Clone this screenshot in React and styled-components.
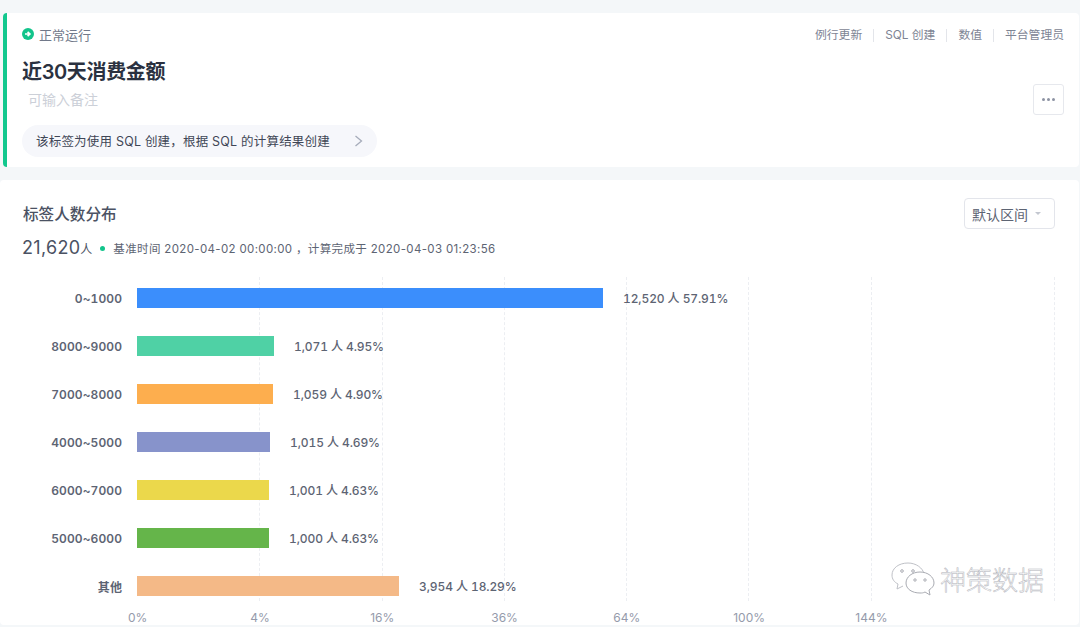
import React from 'react';
import styled, { createGlobalStyle } from 'styled-components';

const rows = [
  { name: '0~1000', width: 466, color: '#3b8efc', value: '12,520 人 57.91%' },
  { name: '8000~9000', width: 137, color: '#4fd1a5', value: '1,071 人 4.95%' },
  { name: '7000~8000', width: 136, color: '#fdae4e', value: '1,059 人 4.90%' },
  { name: '4000~5000', width: 133, color: '#8793cb', value: '1,015 人 4.69%' },
  { name: '6000~7000', width: 132, color: '#ebd84b', value: '1,001 人 4.63%' },
  { name: '5000~6000', width: 132, color: '#65b54a', value: '1,000 人 4.63%' },
  { name: '其他', width: 262, color: '#f4b987', value: '3,954 人 18.29%' },
];

const ticks = ['0%', '4%', '16%', '36%', '64%', '100%', '144%'];
const tags = ['例行更新', 'SQL 创建', '数值', '平台管理员'];

const App = () => {
  return (
    <Page>
      <GlobalStyle />
      <TopCard>
        <TopLeft>
          <Status>
            <svg width="12" height="12" viewBox="0 0 12 12">
              <circle cx="6" cy="6" r="6" fill="#12c48b" />
              <path d="M3 6h4.2M5.6 3.8 7.9 6 5.6 8.2" fill="none" stroke="#fff" strokeWidth="1.7" />
            </svg>
            正常运行
          </Status>
          <Title>近30天消费金额</Title>
          <Note>可输入备注</Note>
          <Pill>
            <span>该标签为使用 SQL 创建，根据 SQL 的计算结果创建</span>
            <svg width="9" height="12" viewBox="0 0 9 12">
              <path d="M1.5 1 7.5 6 1.5 11" fill="none" stroke="#a6acba" strokeWidth="1.3" />
            </svg>
          </Pill>
        </TopLeft>
        <TopRight>
          <Tags>
            {tags.map((t) => (
              <Tag key={t}>{t}</Tag>
            ))}
          </Tags>
          <MoreButton>
            <Dot />
            <Dot />
            <Dot />
          </MoreButton>
        </TopRight>
      </TopCard>

      <ChartCard>
        <ChartHead>
          <ChartTitle>标签人数分布</ChartTitle>
          <Select>
            默认区间
            <Caret />
          </Select>
        </ChartHead>
        <Meta>
          <Count>21,620</Count>
          <Unit>人</Unit>
          <GreenDot />
          <MetaText>基准时间 2020-04-02 00:00:00 ，计算完成于 2020-04-03 01:23:56</MetaText>
        </Meta>
        <Plot>
          <Grid>
            {ticks.slice(1).map((t) => (
              <GridCell key={t} />
            ))}
            <LastGridCell />
          </Grid>
          {rows.map((r) => (
            <Row key={r.name}>
              <Label>{r.name}</Label>
              <Bar $color={r.color} style={{ width: r.width }} />
              <Value>{r.value}</Value>
            </Row>
          ))}
        </Plot>
        <Axis>
          {ticks.map((t) => (
            <Tick key={t}>{t}</Tick>
          ))}
        </Axis>
        <Watermark>
          <svg width="44" height="34" viewBox="0 0 44 34">
            <path d="M17 1C8 1 1 6 1 13c0 4 2 7 6 9l-1 5 6-3" fill="#fff" stroke="#bfc1c7" strokeWidth="1" />
            <path d="M17 1c8 0 15 5 16 11" fill="none" stroke="#bfc1c7" strokeWidth="1" />
            <path d="M29 10c-8 0-14 5-14 11s6 10 14 10c2 0 3 0 5-1l5 3-1-5c3-2 5-4 5-7 0-6-6-11-14-11Z" fill="#fff" stroke="#a9abb2" strokeWidth="1" />
            <circle cx="11" cy="9" r="1.3" fill="none" stroke="#a9abb2" />
            <circle cx="22" cy="9" r="1.3" fill="none" stroke="#a9abb2" />
            <circle cx="24" cy="18" r="1.2" fill="none" stroke="#a9abb2" />
            <circle cx="34" cy="18" r="1.2" fill="none" stroke="#a9abb2" />
          </svg>
          <WatermarkText>神策数据</WatermarkText>
        </Watermark>
      </ChartCard>
    </Page>
  );
};

export default App;

const GlobalStyle = createGlobalStyle`
  html, body {
    margin: 0;
    padding: 0;
    background: #f4f7f9;
  }
  * {
    box-sizing: border-box;
  }
`;

const Page = styled.div`
  width: 1080px;
  height: 627px;
  padding-top: 13px;
  overflow: hidden;
  background: #f4f7f9;
  font-family: Inter, "Noto Sans CJK SC", sans-serif;
`;

const TopCard = styled.div`
  display: flex;
  justify-content: space-between;
  height: 154px;
  margin: 0 1px 13px 3px;
  padding: 12px 15px 10px 15px;
  background: #fff;
  border-left: 4px solid #12c88e;
  border-radius: 4px;
`;

const TopLeft = styled.div`
  display: flex;
  flex-direction: column;
  align-items: flex-start;
`;

const Status = styled.div`
  display: flex;
  align-items: center;
  gap: 5px;
  height: 18px;
  font-size: 13px;
  color: #71798a;
  svg {
    flex: none;
  }
`;

const Title = styled.div`
  margin-top: 15px;
  font-size: 20px;
  line-height: 28px;
  font-weight: 600;
  letter-spacing: -0.35px;
  color: #2a3140;
`;

const Note = styled.div`
  margin: 4px 0 0 6px;
  font-size: 14px;
  line-height: 20px;
  color: #ccd0d8;
`;

const Pill = styled.div`
  display: flex;
  align-items: center;
  justify-content: space-between;
  width: 355px;
  height: 32px;
  margin-top: 15px;
  padding: 0 14px;
  font-size: 12.5px;
  letter-spacing: 0.2px;
  color: #3f4656;
  background: #f6f7fb;
  border-radius: 16px;
  span {
    margin-top: -1px;
  }
`;

const TopRight = styled.div`
  display: flex;
  flex-direction: column;
  align-items: flex-end;
`;

const Tags = styled.div`
  display: flex;
  align-items: center;
  height: 18px;
  margin-top: 1px;
`;

const Tag = styled.div`
  padding: 0 11px;
  font-size: 11.8px;
  line-height: 13px;
  color: #7d8494;
  border-left: 1px solid #e3e5ea;
  &:first-child {
    border-left: none;
  }
  &:last-child {
    padding-right: 0;
  }
`;

const MoreButton = styled.div`
  display: flex;
  align-items: center;
  justify-content: center;
  gap: 2px;
  width: 31px;
  height: 31px;
  margin-top: 40px;
  border: 1px solid #e6e8ed;
  border-radius: 3px;
`;

const Dot = styled.span`
  width: 3px;
  height: 3px;
  border-radius: 50%;
  background: #8d93a3;
`;

const ChartCard = styled.div`
  position: relative;
  height: 445px;
  margin-right: 1px;
  padding: 18px 24px 0 23px;
  background: #fff;
  border-radius: 4px;
`;

const ChartHead = styled.div`
  display: flex;
  align-items: center;
  justify-content: space-between;
  height: 31px;
`;

const ChartTitle = styled.div`
  margin-top: -2px;
  font-size: 15.6px;
  font-weight: 500;
  color: #4b5263;
`;

const Select = styled.div`
  display: flex;
  align-items: center;
  justify-content: space-between;
  width: 91px;
  height: 31px;
  padding: 0 13px 0 7px;
  font-size: 14px;
  color: #5d6473;
  border: 1px solid #e3e5eb;
  border-radius: 4px;
`;

const Caret = styled.span`
  width: 0;
  height: 0;
  border-left: 3px solid transparent;
  border-right: 3px solid transparent;
  border-top: 3px solid #c3c7d0;
`;

const Meta = styled.div`
  display: flex;
  align-items: center;
  height: 24px;
  margin: 6px 0 0 -1px;
`;

const Count = styled.span`
  font-size: 18px;
  font-weight: 400;
  letter-spacing: 0.3px;
  color: #4b5263;
`;

const Unit = styled.span`
  margin-top: 3px;
  font-size: 12px;
  color: #4b5263;
`;

const GreenDot = styled.span`
  width: 5px;
  height: 5px;
  margin: 2px 8px 0 8px;
  border-radius: 50%;
  background: #12c48b;
`;

const MetaText = styled.span`
  margin-top: 1px;
  font-size: 11.5px;
  letter-spacing: 0.35px;
  color: #5d6473;
`;

const Plot = styled.div`
  position: relative;
  margin-top: 15px;
`;

const Grid = styled.div`
  position: absolute;
  top: 3px;
  bottom: 9px;
  left: 115px;
  right: 0;
  display: flex;
`;

const GridCell = styled.div`
  flex: none;
  width: 122.3px;
  border-right: 1px dashed #eceef2;
`;

const LastGridCell = styled.div`
  flex: 1;
  border-right: 1px dashed #eceef2;
`;

const Row = styled.div`
  position: relative;
  display: flex;
  align-items: center;
  height: 48px;
`;

const Label = styled.div`
  flex: none;
  width: 99px;
  margin-right: 15px;
  font-size: 12px;
  font-weight: 600;
  font-variant-numeric: tabular-nums;
  letter-spacing: 0.1px;
  text-align: right;
  color: #5d6473;
`;

const Bar = styled.div`
  flex: none;
  height: 20px;
  background: ${(p) => p.$color};
`;

const Value = styled.div`
  margin: 0 0 2px 20px;
  font-size: 12px;
  font-weight: 500;
  font-variant-numeric: tabular-nums;
  letter-spacing: -0.1px;
  white-space: nowrap;
  color: #5d6473;
`;

const Axis = styled.div`
  display: flex;
  margin-top: -1px;
  padding-left: 53.5px;
`;

const Tick = styled.div`
  flex: none;
  width: 122.3px;
  font-size: 12px;
  line-height: 18px;
  text-align: center;
  color: #959bab;
`;

const Watermark = styled.div`
  position: absolute;
  top: 380px;
  left: 891px;
  display: flex;
  align-items: center;
  gap: 5px;
`;

const WatermarkText = styled.span`
  font-size: 26px;
  font-weight: 300;
  color: #fff;
  -webkit-text-stroke: 0.5px #b0b2b9;
`;
